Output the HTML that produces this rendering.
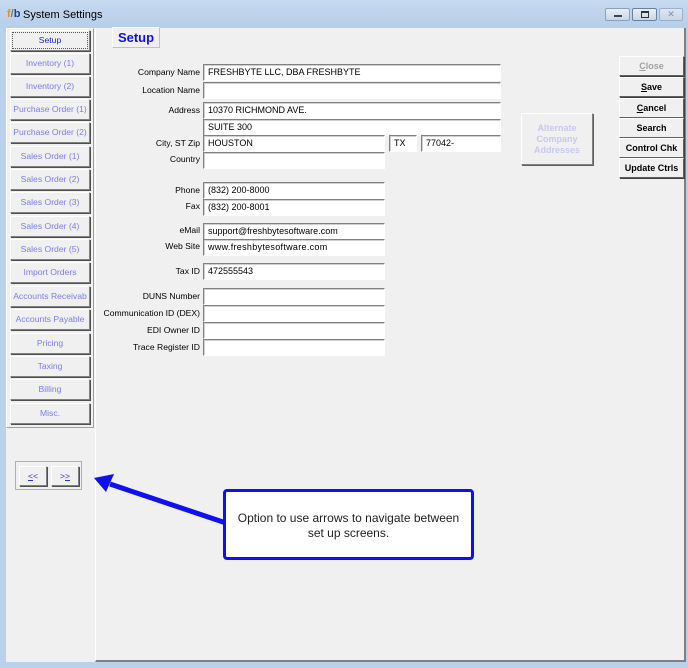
<!DOCTYPE html>
<html><head><style>
*{margin:0;padding:0;box-sizing:border-box}
body{width:688px;height:668px;background:#b9d1ea;position:relative;overflow:hidden;font-family:"Liberation Sans",Arial,sans-serif;font-size:9px;color:#000}
.a{position:absolute}
.client{left:6px;top:28px;width:680px;height:634px;background:#f0f0f0}
.nb{position:absolute;left:10px;width:80px;height:21px;background:#f0f0f0;border:1px solid;border-color:#fff #808080 #808080 #fff;box-shadow:1px 1px 0 #505050;color:#7b7bf2;text-align:center;line-height:19px;font-size:8.6px;white-space:nowrap;overflow:hidden}
.lbl{position:absolute;right:488px;text-align:right;font-size:8.6px;white-space:nowrap}
.in{position:absolute;background:#fff;border:1px solid;border-color:#808080 #fff #fff #808080;box-shadow:inset 1px 1px 0 #d0d0d0;font-size:9px;line-height:14px;padding-left:4px;white-space:nowrap;overflow:hidden}
.rb{position:absolute;left:619px;width:65px;height:20px;border:1px solid;border-color:#fff #606060 #606060 #fff;box-shadow:1px 1px 0 #404040;text-align:center;font-weight:bold;font-size:9px;line-height:18px;background:#f0f0f0}
u{text-decoration:underline}
</style></head><body>
<div class="a" style="left:0;top:0;width:688px;height:28px;background:linear-gradient(#c6daf0,#b6cee8)"></div>
<div class="a" style="left:7px;top:8px;font-size:11px;font-weight:bold;color:#e09030">f<span style="color:#7a7a7a">/</span><span style="color:#2040a0">b</span></div>
<div class="a" style="left:23px;top:9px;font-size:11px;color:#000">System Settings</div>
<div class="a" style="left:605px;top:8px;width:25px;height:13px;border:1px solid #8aa0bc;border-radius:2px;background:linear-gradient(#e8eef6,#c8d6e8)"><div class="a" style="left:8px;top:6px;width:8px;height:2px;background:#444"></div></div>
<div class="a" style="left:632px;top:8px;width:25px;height:13px;border:1px solid #6a80a0;border-radius:2px;background:linear-gradient(#e8eef6,#c8d6e8)"><div class="a" style="left:8px;top:2px;width:8px;height:7px;border:1px solid #333;border-top-width:2px"></div></div>
<div class="a" style="left:659px;top:8px;width:24px;height:13px;border:1px solid #9ab0cc;border-radius:2px;background:linear-gradient(#dde7f3,#c8d6e8);color:#8090a8;font-size:9px;text-align:center;line-height:11px">✕</div>
<div class="a client"></div>
<div class="a" style="left:6px;top:28px;width:88px;height:400px;border:1px solid;border-color:#fff #a0a0a0 #a0a0a0 #fff"></div>
<div class="a" style="left:95px;top:28px;width:591px;height:634px;border-right:2px solid #808080;border-bottom:2px solid #808080;border-left:1px solid #fff"></div>
<div class="nb" style="top:30px;color:#2020d0;outline:1px dotted #555;outline-offset:-3px">Setup</div>
<div class="nb" style="top:53px">Inventory (1)</div>
<div class="nb" style="top:76px">Inventory (2)</div>
<div class="nb" style="top:99px">Purchase Order (1)</div>
<div class="nb" style="top:122px">Purchase Order (2)</div>
<div class="nb" style="top:146px">Sales Order (1)</div>
<div class="nb" style="top:169px">Sales Order (2)</div>
<div class="nb" style="top:192px">Sales Order (3)</div>
<div class="nb" style="top:216px">Sales Order (4)</div>
<div class="nb" style="top:239px">Sales Order (5)</div>
<div class="nb" style="top:262px">Import Orders</div>
<div class="nb" style="top:286px">Accounts Receivab</div>
<div class="nb" style="top:309px">Accounts Payable</div>
<div class="nb" style="top:333px">Pricing</div>
<div class="nb" style="top:356px">Taxing</div>
<div class="nb" style="top:379px">Billing</div>
<div class="nb" style="top:403px">Misc.</div>
<div class="a" style="left:15px;top:461px;width:67px;height:29px;border:1px solid #b0b0b0"></div>
<div class="nb" style="left:19px;top:466px;width:28px;height:20px;color:#3030e0"><u>&lt;</u>&lt;</div>
<div class="nb" style="left:51px;top:466px;width:28px;height:20px;color:#3030e0">&gt;<u>&gt;</u></div>
<div class="a" style="left:112px;top:27px;width:48px;height:21px;border:1px solid;border-color:#fff #c0c0c0 #c0c0c0 #fff;color:#1010e0;font-weight:bold;font-size:13px;text-align:center;line-height:19px">Setup</div>
<div class="lbl" style="top:67px">Company Name</div><div class="in" style="left:203px;top:64px;width:298px;height:17px">FRESHBYTE LLC, DBA FRESHBYTE</div>
<div class="lbl" style="top:85px">Location Name</div><div class="in" style="left:203px;top:82px;width:298px;height:17px"></div>
<div class="lbl" style="top:105px">Address</div><div class="in" style="left:203px;top:102px;width:298px;height:17px">10370 RICHMOND AVE.</div>
<div class="in" style="left:203px;top:119px;width:298px;height:17px">SUITE 300</div>
<div class="lbl" style="top:138px">City, ST Zip</div><div class="in" style="left:203px;top:135px;width:182px;height:17px">HOUSTON</div>
<div class="in" style="left:389px;top:135px;width:28px;height:17px">TX</div>
<div class="in" style="left:421px;top:135px;width:80px;height:17px">77042-</div>
<div class="lbl" style="top:154px">Country</div><div class="in" style="left:203px;top:152px;width:182px;height:17px"></div>
<div class="lbl" style="top:185px">Phone</div><div class="in" style="left:203px;top:182px;width:182px;height:17px">(832) 200-8000</div>
<div class="lbl" style="top:201px">Fax</div><div class="in" style="left:203px;top:199px;width:182px;height:17px">(832) 200-8001</div>
<div class="lbl" style="top:225px">eMail</div><div class="in" style="left:203px;top:223px;width:182px;height:17px">support@freshbytesoftware.com</div>
<div class="lbl" style="top:241px">Web Site</div><div class="in" style="left:203px;top:239px;width:182px;height:17px;letter-spacing:0.3px">www.freshbytesoftware.com</div>
<div class="lbl" style="top:266px">Tax ID</div><div class="in" style="left:203px;top:263px;width:182px;height:17px">472555543</div>
<div class="lbl" style="top:291px">DUNS Number</div><div class="in" style="left:203px;top:288px;width:182px;height:17px"></div>
<div class="lbl" style="top:308px">Communication ID (DEX)</div><div class="in" style="left:203px;top:305px;width:182px;height:17px"></div>
<div class="lbl" style="top:325px">EDI Owner ID</div><div class="in" style="left:203px;top:322px;width:182px;height:17px"></div>
<div class="lbl" style="top:342px">Trace Register ID</div><div class="in" style="left:203px;top:339px;width:182px;height:17px"></div>
<div class="a" style="left:521px;top:113px;width:72px;height:52px;border:1px solid;border-color:#fff #808080 #808080 #fff;box-shadow:1px 1px 0 #606060;color:#c8c8f0;font-weight:bold;font-size:9px;text-align:center;line-height:11px;padding-top:9px">Alternate<br>Company<br>Addresses</div>
<div class="rb" style="top:56px;color:#a0a0a0"><u>C</u>lose</div>
<div class="rb" style="top:77px"><u>S</u>ave</div>
<div class="rb" style="top:98px"><u>C</u>ancel</div>
<div class="rb" style="top:118px">Search</div>
<div class="rb" style="top:138px">Control Chk</div>
<div class="rb" style="top:158px">Update Ctrls</div>
<svg class="a" style="left:0;top:0" width="688" height="668">
<line x1="226" y1="523" x2="110" y2="484" stroke="#1010ee" stroke-width="5"/>
<polygon points="94,478 114,474 106,492" fill="#1010ee"/>
</svg>
<div class="a" style="left:223px;top:489px;width:251px;height:71px;background:#fff;border:3px solid #1010ee;border-radius:4px;text-align:center;font-size:12px;color:#222;line-height:15px;padding-top:19px">Option to use arrows to navigate between<br>set up screens.</div>
</body></html>
